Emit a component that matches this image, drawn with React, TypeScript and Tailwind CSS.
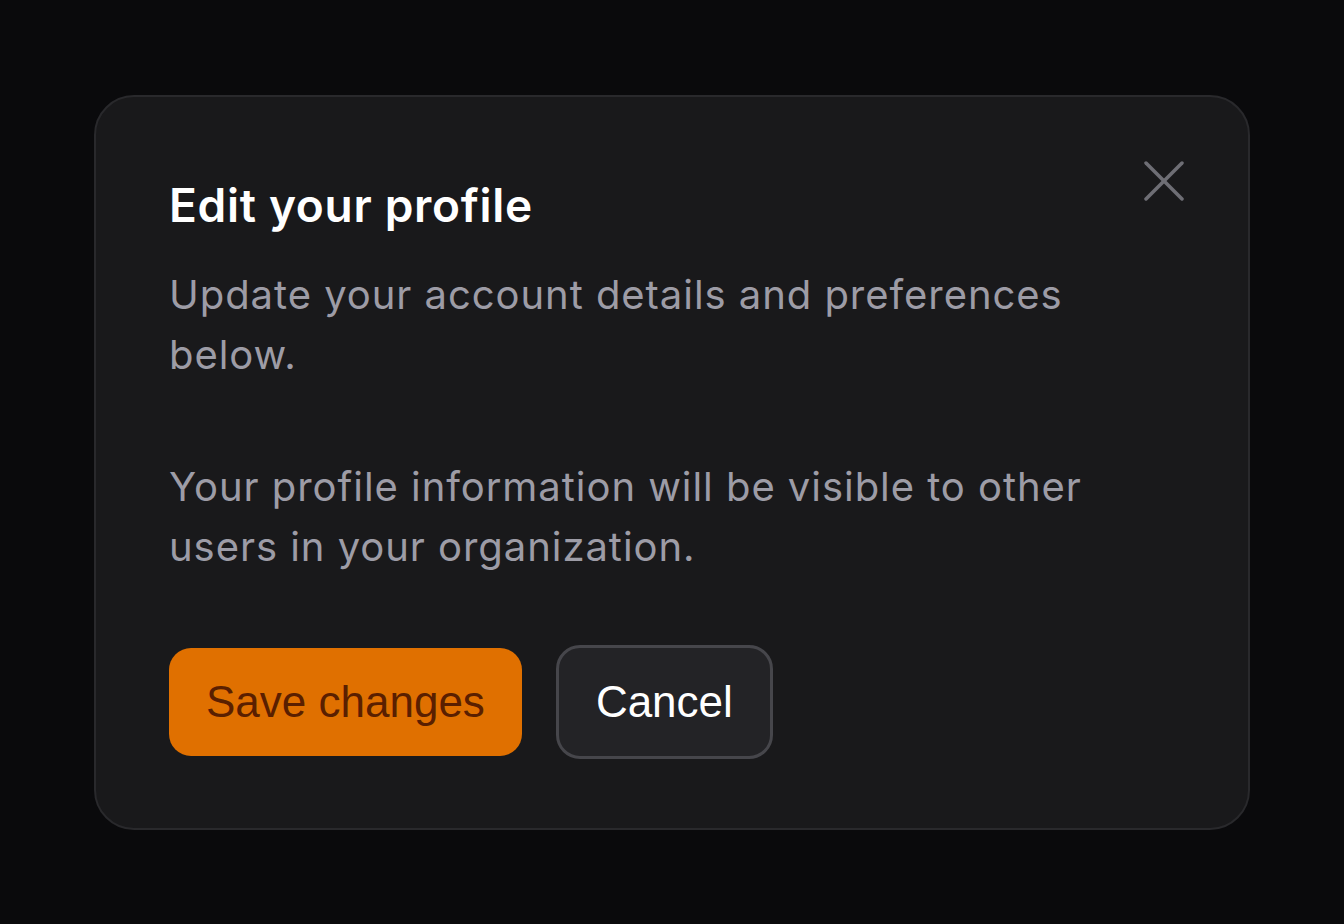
import React from "react";

export default function App() {
  return (
    <div className="flex h-screen w-full items-center justify-center bg-[#0a0a0c]" style={{ fontFamily: "Inter, 'Noto Sans', sans-serif" }}>
      <div className="relative flex w-[1156px] flex-col rounded-[40px] border-2 border-[#29292c] bg-[#19191b] pb-[69px] pl-[73px] pr-[73px] pt-[80px]">
        <button className="absolute right-[64px] top-[64px] flex h-[40px] w-[40px] items-center justify-center text-[#6e6e75]" aria-label="Close">
          <svg width="40" height="40" viewBox="0 0 40 40" fill="none" stroke="currentColor" strokeWidth="3.5" strokeLinecap="round">
            <path d="M2 2L38 38" />
            <path d="M38 2L2 38" />
          </svg>
        </button>
        <h2 className="text-[46px] font-semibold leading-[56px] tracking-[0.7px] text-white">Edit your profile</h2>
        <p className="mt-[32px] text-[40px] leading-[60px] tracking-[0.95px] text-[#9d9ca6]">
          Update your account details and preferences below.
        </p>
        <p className="mt-[72px] text-[40px] leading-[60px] tracking-[0.95px] text-[#9d9ca6]">
          Your profile information will be visible to other users in your organization.
        </p>
        <div className="mt-[68px] flex items-center gap-[34px]" style={{ fontFamily: "'Liberation Sans', Arial, sans-serif" }}>
          <button className="flex h-[108px] items-center rounded-[22px] bg-[#e07000] px-[37px] text-[44px] text-[#5a1f00]">
            Save changes
          </button>
          <button className="flex h-[114px] items-center rounded-[24px] border-[3px] border-[#46464b] bg-[#232326] px-[37px] text-[44px] text-white">
            Cancel
          </button>
        </div>
      </div>
    </div>
  );
}
